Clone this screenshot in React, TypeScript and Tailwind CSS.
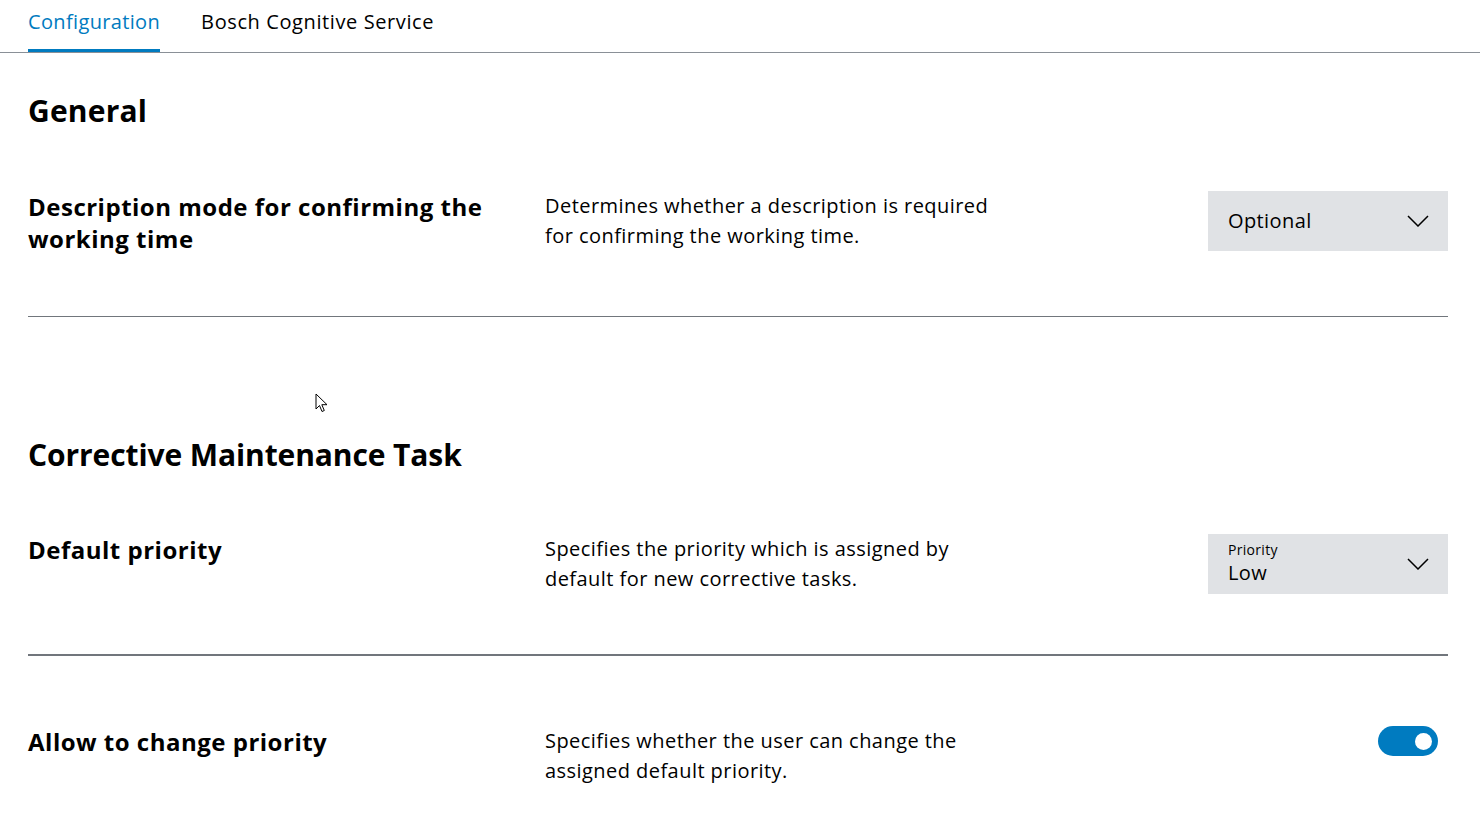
import React from 'react'

function Chevron() {
  return (
    <svg width="22" height="12" viewBox="0 0 22 12" fill="none" className="shrink-0">
      <path d="M1 1l10 10L21 1" stroke="#000" strokeWidth="1.5" />
    </svg>
  )
}

function Select({ label, value }: { label?: string; value: string }) {
  return (
    <div className="flex h-[60px] w-[240px] shrink-0 items-center justify-between bg-[#e0e2e5] pl-5 pr-[19px]">
      {label ? (
        <div className="flex flex-col pb-[2px]">
          <span className="text-[14px] leading-[20px] tracking-[0.3px] text-[#000]">{label}</span>
          <span className="text-[20px] leading-[26px] tracking-[0.4px] text-[#000]">{value}</span>
        </div>
      ) : (
        <span className="text-[20px] leading-[26px] tracking-[0.4px] text-[#000]">{value}</span>
      )}
      <Chevron />
    </div>
  )
}

function Row({
  title,
  desc,
  children,
  className,
}: {
  title: string
  desc: string
  children: React.ReactNode
  className?: string
}) {
  return (
    <div className={'flex items-start ' + (className ?? '')}>
      <h3 className="w-[517px] shrink-0 pr-6 text-[24px] font-bold leading-[32px] tracking-[0.5px]">{title}</h3>
      <p className="w-[470px] shrink-0 text-[20px] leading-[30px] tracking-[0.45px]">{desc}</p>
      <div className="ml-auto">{children}</div>
    </div>
  )
}

export default function App() {
  return (
    <div className="relative min-h-[827px] bg-white text-black" style={{ fontFamily: '"Open Sans", "Noto Sans", sans-serif' }}>
      <div className="flex h-[53px] gap-[41px] border-b border-[#8a9097] pl-7">
        <div className="flex h-full flex-col justify-between">
          <span className="pt-[7px] text-[20px] leading-[30px] tracking-[0.35px] text-[#007bc0]">Configuration</span>
          <span className="h-[3px] bg-[#007bc0]" />
        </div>
        <span className="pt-[7px] text-[20px] leading-[30px] tracking-[0.6px]">Bosch Cognitive Service</span>
      </div>

      <div className="pl-7 pr-8">
        <h2 className="mt-[40px] text-[30px] font-bold leading-[36px] tracking-[0.2px]">General</h2>
        <Row
          className="mt-[62px] border-b border-[#71767c] pb-[61px]"
          title="Description mode for confirming the working time"
          desc="Determines whether a description is required for confirming the working time."
        >
          <Select value="Optional" />
        </Row>

        <h2 className="mt-[120px] text-[30px] font-bold leading-[36px] tracking-[-0.1px]">Corrective Maintenance Task</h2>
        <Row
          className="mt-[61px] border-b-2 border-[#71767c] pb-[60px]"
          title="Default priority"
          desc="Specifies the priority which is assigned by default for new corrective tasks."
        >
          <Select label="Priority" value="Low" />
        </Row>

        <Row
          className="mt-[70px]"
          title="Allow to change priority"
          desc="Specifies whether the user can change the assigned default priority."
        >
          <div className="mr-[10px] flex h-[30px] w-[60px] items-center justify-end rounded-full bg-[#007bc0] pr-[6px]">
            <span className="h-[17px] w-[17px] rounded-full bg-white" />
          </div>
        </Row>
      </div>

      <svg className="absolute left-[315px] top-[393px]" width="14" height="20" viewBox="0 0 14 20">
        <path d="M1 1v15l3.5-3.5 2.5 6 2.3-1-2.5-5.8H12z" fill="#fff" stroke="#000" strokeWidth="1" />
      </svg>
    </div>
  )
}
